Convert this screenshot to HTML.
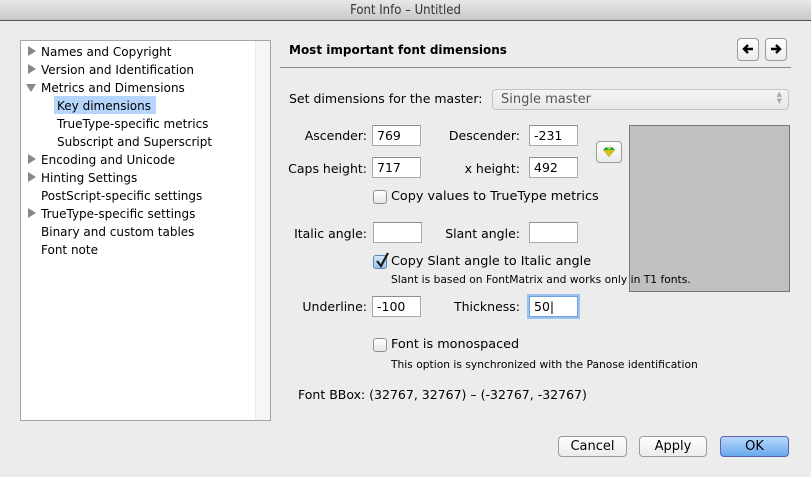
<!DOCTYPE html>
<html><head><meta charset="utf-8"><style>
*{margin:0;padding:0;box-sizing:border-box}
body{width:811px;height:477px;background:#ececec;font-family:"DejaVu Sans","Liberation Sans",sans-serif;font-size:12px;color:#000;position:relative;overflow:hidden}
.a{position:absolute;white-space:nowrap}
.title{left:0;top:0;width:811px;height:21px;background:linear-gradient(#e8e8e8,#c8c8c8);border-bottom:1px solid #555;text-align:center;line-height:21px;font-size:13px;color:#333;font-family:"DejaVu Sans Condensed","DejaVu Sans",sans-serif}
.panel{left:20px;top:40px;width:251px;height:381px;border:1px solid #a5a5a5;background:#fff}
.strip{left:255px;top:41px;width:15px;height:379px;background:#f6f6f6;border-left:1px solid #eaeaea}
.tri{position:absolute;width:0;height:0}
.tr{border-left:8px solid #888;border-top:5px solid transparent;border-bottom:5px solid transparent}
.td{border-top:8px solid #888;border-left:5px solid transparent;border-right:5px solid transparent}
.f{position:absolute;background:#fff;border:1px solid #a8a8a8;border-top-color:#8c8c8c;height:21px;width:49px;padding-left:4px;line-height:19px;font-size:12.5px}
.cb{position:absolute;width:14px;height:14px;border:1px solid #8f8f8f;border-radius:3px;background:linear-gradient(#fff,#e6e6e6)}
.btn{position:absolute;height:21px;border:1px solid #9a9a9a;border-radius:4px;background:linear-gradient(#fff,#ececec);text-align:center;line-height:19px;font-size:13px}
.r{text-align:right}
.sm{font-size:10.7px}
.lb{font-size:12.5px}
</style></head><body>
<div class="a title">Font Info – Untitled</div>
<div class="a panel"></div>
<div class="a strip"></div>
<div class="a" style="left:54px;top:96px;width:102px;height:18px;background:#b5d5fd"></div>
<div class="tri tr" style="left:28px;top:46px"></div>
<div class="tri tr" style="left:28px;top:64px"></div>
<div class="tri td" style="left:26px;top:84px"></div>
<div class="tri tr" style="left:28px;top:154px"></div>
<div class="tri tr" style="left:28px;top:172px"></div>
<div class="tri tr" style="left:28px;top:208px"></div>
<div class="a" style="left:41px;top:43px;line-height:18px">Names and Copyright<br>Version and Identification<br>Metrics and Dimensions</div>
<div class="a" style="left:57px;top:97px;line-height:18px">Key dimensions<br>TrueType-specific metrics<br>Subscript and Superscript</div>
<div class="a" style="left:41px;top:151px;line-height:18px">Encoding and Unicode<br>Hinting Settings<br>PostScript-specific settings<br>TrueType-specific settings<br>Binary and custom tables<br>Font note</div>

<div class="a" style="left:289px;top:43px;font-weight:bold;font-size:12px">Most important font dimensions</div>
<div class="a" style="left:280px;top:67px;width:511px;height:1px;background:#8a8a8a"></div>
<div class="btn" style="left:737px;top:38px;width:22px;height:23px">
<svg width="12" height="12" viewBox="0 0 12 12" style="margin-top:4px"><path d="M11 6H3M6 2L2 6L6 10" stroke="#000" stroke-width="2.4" fill="none"/></svg></div>
<div class="btn" style="left:765px;top:38px;width:22px;height:23px">
<svg width="12" height="12" viewBox="0 0 12 12" style="margin-top:4px"><path d="M1 6H9M6 2L10 6L6 10" stroke="#000" stroke-width="2.4" fill="none"/></svg></div>

<div class="a lb" style="left:289px;top:91px">Set dimensions for the master:</div>
<div class="a" style="left:492px;top:89px;width:297px;height:21px;border:1px solid #c4c4c4;border-radius:4px;background:linear-gradient(#f4f4f4,#e8e8e8);padding-left:8px;line-height:19px;color:#555;font-size:13px">Single master<span style="position:absolute;right:6px;top:1px;font-size:7px;line-height:7px;color:#aaa">▲<br>▼</span></div>

<div class="a r lb" style="left:280px;width:87px;top:128px">Ascender:</div>
<div class="f" style="left:372px;top:125px">769</div>
<div class="a r lb" style="left:430px;width:90px;top:128px">Descender:</div>
<div class="f" style="left:529px;top:125px">-231</div>
<div class="a r lb" style="left:280px;width:87px;top:161px">Caps height:</div>
<div class="f" style="left:372px;top:157px">717</div>
<div class="a r lb" style="left:430px;width:90px;top:161px">x height:</div>
<div class="f" style="left:529px;top:157px">492</div>
<div class="btn" style="left:596px;top:141px;width:26px;height:22px">
<svg width="14" height="12" viewBox="0 0 14 12" style="margin-top:4px"><polygon points="1,4 4,1 10,1 13,4 7,11" fill="#2aa02a"/><polygon points="1,4 13,4 7,11" fill="#d6c020"/><polygon points="4,1 10,1 7,4" fill="#9be07a"/></svg></div>
<div class="a" style="left:629px;top:125px;width:161px;height:167px;background:#c0c0c0;border:1px solid #777"></div>

<div class="cb" style="left:373px;top:190px"></div>
<div class="a" style="left:391px;top:189px;font-size:12.8px">Copy values to TrueType metrics</div>

<div class="a r lb" style="left:280px;width:87px;top:226px">Italic angle:</div>
<div class="f" style="left:373px;top:222px"></div>
<div class="a r lb" style="left:430px;width:90px;top:226px">Slant angle:</div>
<div class="f" style="left:529px;top:222px"></div>

<div class="cb" style="left:373px;top:255px;background:linear-gradient(#d4e6fb,#9fc4ee);border-color:#5f86b8"></div>
<svg class="a" style="left:374px;top:251px" width="16" height="18" viewBox="0 0 16 18"><path d="M3 10L7 15L14 2" stroke="#1a1a1a" stroke-width="2.2" fill="none"/></svg>
<div class="a" style="left:391px;top:254px;font-size:12.8px">Copy Slant angle to Italic angle</div>
<div class="a sm" style="left:391px;top:273px">Slant is based on FontMatrix and works only in T1 fonts.</div>

<div class="a r lb" style="left:280px;width:87px;top:299px">Underline:</div>
<div class="f" style="left:372px;top:296px">-100</div>
<div class="a r lb" style="left:430px;width:90px;top:299px">Thickness:</div>
<div class="f" style="left:529px;top:296px;border-color:#6fa0dc;box-shadow:0 0 0 2px #9cc3ef">50|</div>

<div class="cb" style="left:373px;top:338px"></div>
<div class="a" style="left:391px;top:337px;font-size:12.8px">Font is monospaced</div>
<div class="a sm" style="left:391px;top:358px">This option is synchronized with the Panose identification</div>

<div class="a lb" style="left:298px;top:387px">Font BBox: (32767, 32767) – (-32767, -32767)</div>

<div class="btn" style="left:558px;top:436px;width:69px">Cancel</div>
<div class="btn" style="left:639px;top:436px;width:68px">Apply</div>
<div class="btn" style="left:720px;top:436px;width:69px;background:linear-gradient(#b9d8fb,#6aa9ee);border-color:#5a62b0">OK</div>
</body></html>
